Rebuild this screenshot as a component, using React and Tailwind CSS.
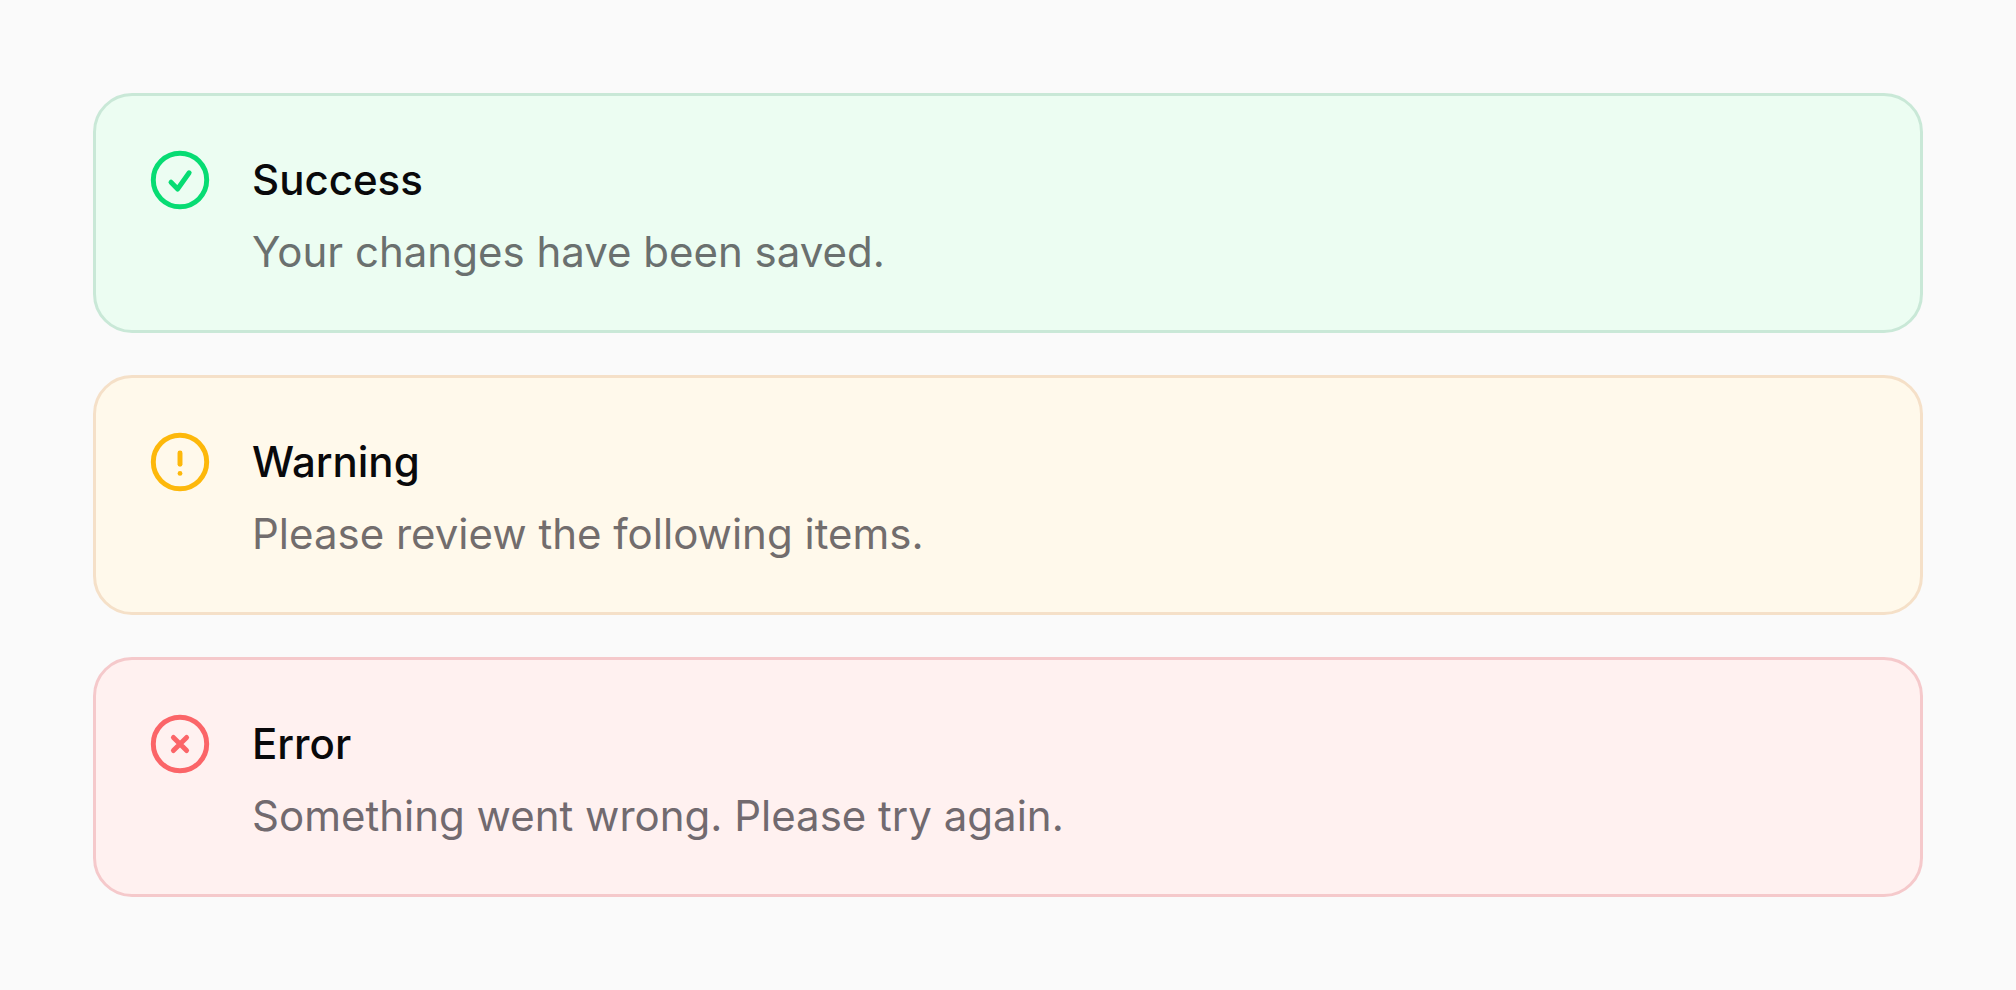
const alerts = [
  {
    title: "Success",
    text: "Your changes have been saved.",
    card: "border-[#c9e8d7] bg-[#ecfdf2]",
    icon: "text-[#07dc73]",
    muted: "text-[#6a706f]",
    mark: <path d="m9 12.75 2.2 2.25 3.85-5.4" />,
  },
  {
    title: "Warning",
    text: "Please review the following items.",
    card: "border-[#f5e0c8] bg-[#fff9eb]",
    icon: "text-[#fdb80b]",
    muted: "text-[#726d6d]",
    mark: (
      <>
        <path d="M12 9v3.75" />
        <circle cx="12" cy="15.8" r="0.8" fill="currentColor" stroke="none" />
      </>
    ),
  },
  {
    title: "Error",
    text: "Something went wrong. Please try again.",
    card: "border-[#f5c9cb] bg-[#fff1f0]",
    icon: "text-[#fb6568]",
    muted: "text-[#716a6f]",
    mark: <path d="m9.8 9.8 4.4 4.4m0-4.4-4.4 4.4" />,
  },
];

function Alert({ title, text, card, icon, muted, mark }) {
  return (
    <div role="alert" className={`flex gap-9 rounded-[39px] border-3 px-12 pt-12 pb-[42px] ${card}`}>
      <svg
        viewBox="0 0 24 24"
        fill="none"
        stroke="currentColor"
        strokeWidth="1.65"
        strokeLinecap="round"
        strokeLinejoin="round"
        aria-hidden="true"
        className={`size-[72px] shrink-0 ${icon}`}
      >
        <circle cx="12" cy="12" r="8.9" />
        {mark}
      </svg>
      <div className="text-[42px] leading-[72px]">
        <h2 className="font-medium text-[#09090b]">{title}</h2>
        <p className={muted}>{text}</p>
      </div>
    </div>
  );
}

export default function App() {
  return (
    <main className="flex min-h-screen flex-col justify-center gap-[42px] bg-[#fafafa] px-[93px] font-['Inter',sans-serif] antialiased">
      {alerts.map((alert) => (
        <Alert key={alert.title} {...alert} />
      ))}
    </main>
  );
}
